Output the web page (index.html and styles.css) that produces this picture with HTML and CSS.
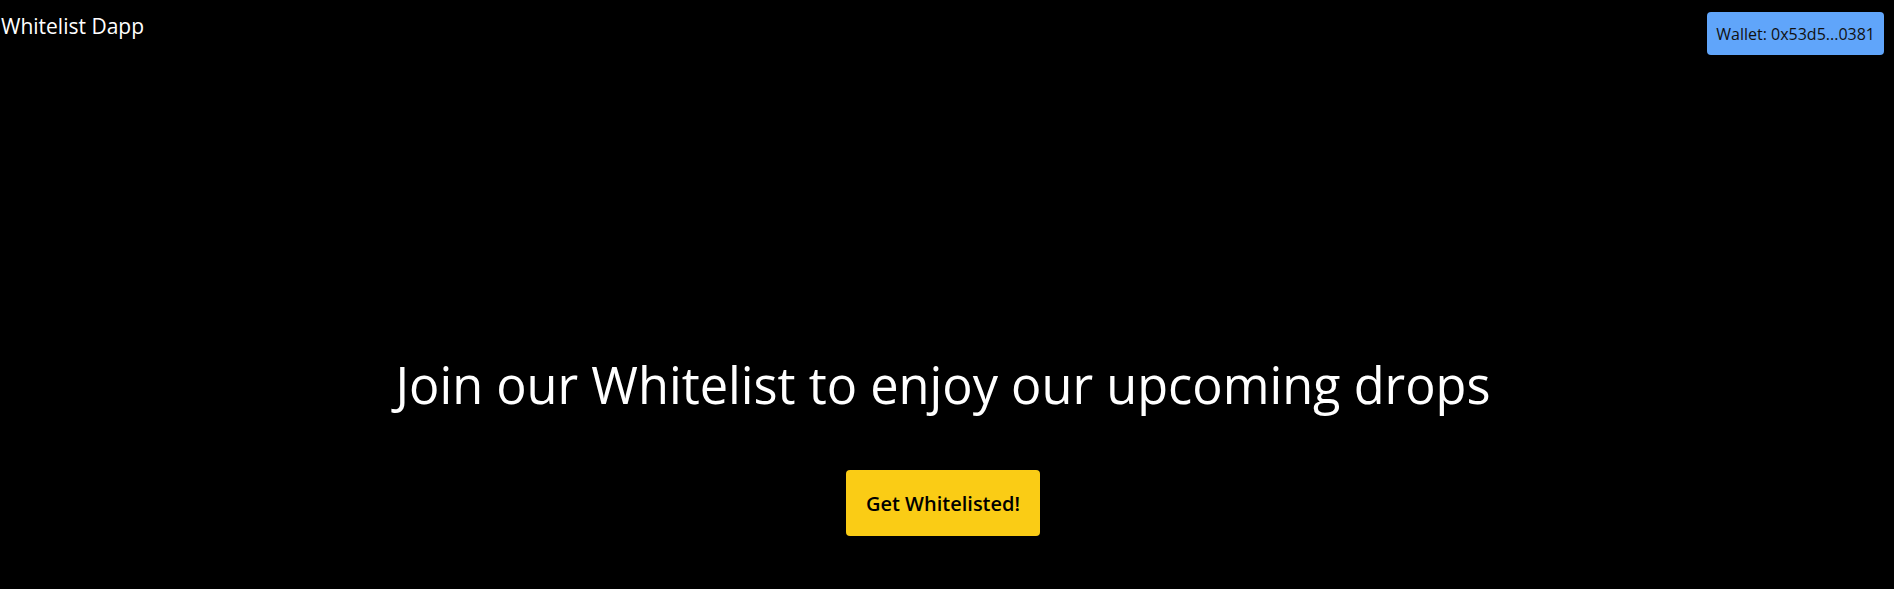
FILE: index.html
```html
<!DOCTYPE html>
<html lang="en">
<head>
<meta charset="utf-8">
<title>Whitelist Dapp</title>
<link rel="stylesheet" href="styles.css">
</head>
<body>
  <header class="topbar">
    <div class="brand">Whitelist Dapp</div>
    <button class="wallet">Wallet: 0x53d5...0381</button>
  </header>
  <main class="hero">
    <h1 class="hero-title">Join our Whitelist to enjoy our upcoming drops</h1>
    <button class="cta">Get Whitelisted!</button>
  </main>
</body>
</html>
```

FILE: styles.css
```css
html, body {
  margin: 0;
  padding: 0;
  background: #000;
  height: 100%;
}
body {
  font-family: "Open Sans", "Noto Sans", sans-serif;
  color: #fff;
}
.topbar {
  display: flex;
  justify-content: space-between;
  align-items: flex-start;
}
.brand {
  font-size: 21px;
  line-height: 28px;
  padding: 12px 0 0 1px;
  color: #fff;
}
.wallet {
  margin: 12px 10px 0 0;
  height: 43px;
  padding: 0 9px;
  border: none;
  border-radius: 4px;
  background: #60a5fa;
  color: #111;
  font-family: inherit;
  font-size: 16px;
}
.hero {
  display: flex;
  flex-direction: column;
  align-items: center;
  padding-top: 305px;
}
.hero-title {
  margin: 0 0 0 -8px;
  font-size: 50.5px;
  line-height: 50px;
  font-weight: 400;
}
.cta {
  margin: 60px 0 0 -8px;
  height: 66px;
  padding: 0 20px;
  border: none;
  border-radius: 4px;
  background: #facc15;
  color: #000;
  font-family: inherit;
  font-size: 20px;
  font-weight: 600;
}
```
